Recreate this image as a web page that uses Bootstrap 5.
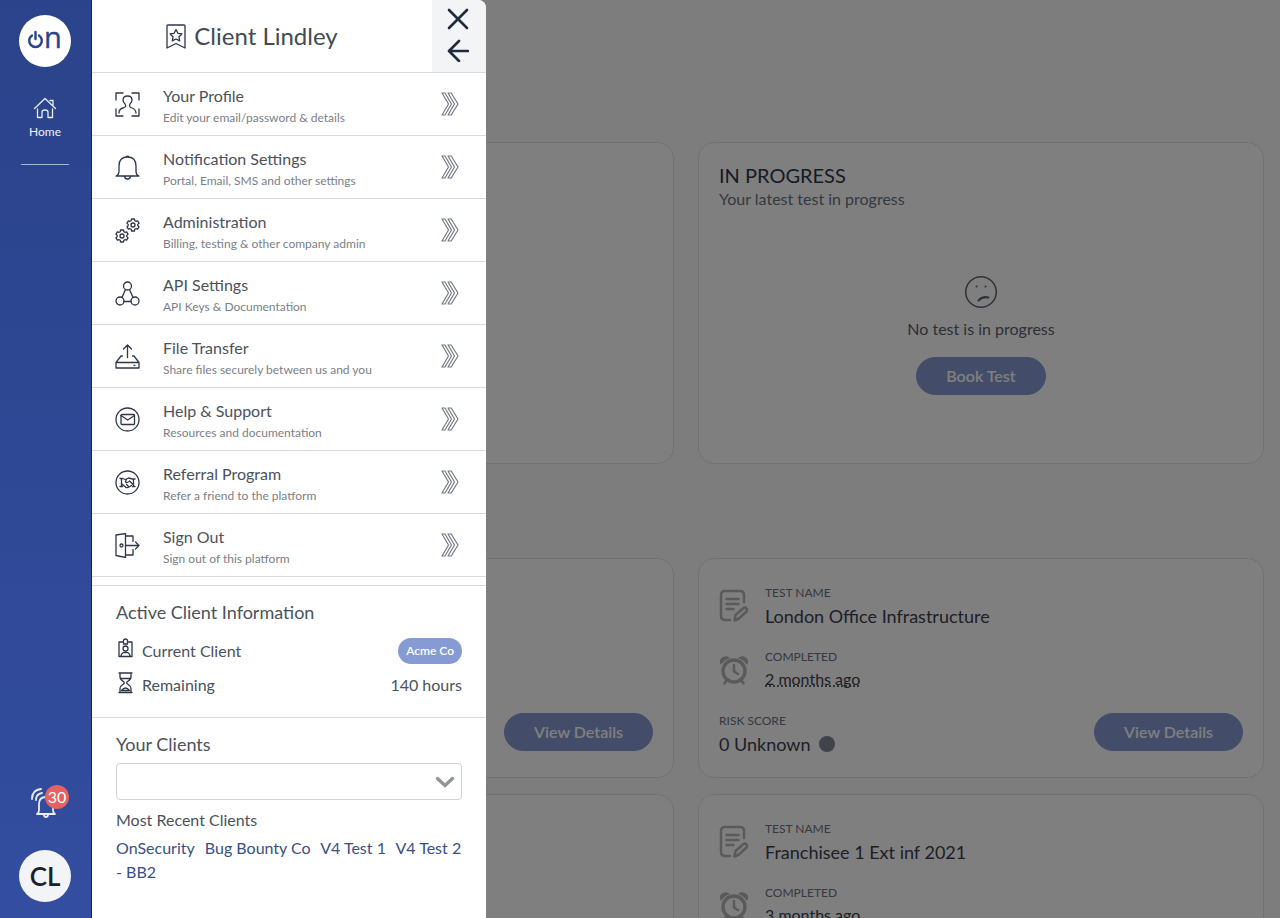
<!DOCTYPE html>
<html lang="en">
<head>
<meta charset="utf-8">
<meta name="viewport" content="width=device-width, initial-scale=1">
<title>Client Portal</title>
<link href="https://cdn.jsdelivr.net/npm/bootstrap@5.3.0/dist/css/bootstrap.min.css" rel="stylesheet">
<style>
  body { font-family: Lato, "Liberation Sans", sans-serif; font-size: 16px; line-height: 24px; color: #4b525b; background: #fafafa; }
  .ico { fill: none; stroke: #2d3748; stroke-width: 1.3; stroke-linecap: round; stroke-linejoin: round; flex: none; }
  .fs-12 { font-size: 12px; line-height: 20px; }
  .fs-18 { font-size: 18px; }

  /* left rail */
  .rail { width: 92px; padding: 15px 1px 0 0; background: linear-gradient(#2b438a, #334da0); border-right: 1px solid #0b1f80; z-index: 3; }
  .disc { width: 52px; height: 52px; background: #fff; }
  .rail .ico { stroke: #e8ecf7; }
  .rail-link { color: #eef1fa; font-size: 12px; line-height: 18px; }
  .rail-rule { width: 48px; margin-top: 23px; border-color: #a9b5db; opacity: 1; }
  .count { width: 24px; height: 24px; top: -3px; left: 15px; background: #e56260; color: #fff; line-height: 24px; }
  .initials { background: #f3f4f6; color: #1a202c; font-size: 26px; font-weight: 600; }

  /* drawer over the page */
  .drawer { left: 92px; top: 0; bottom: 0; width: 394px; background: #fff; border-radius: 0 8px 0 0; z-index: 2; overflow: hidden; }
  .rule { border-bottom: 1px solid #d8dadd; }
  .drawer-title { font-size: 24px; line-height: 32px; padding: 20px 20px 20px 0; color: #434b56; }
  .drawer-tools { width: 54px; padding-right: 2px; background: #f3f4f6; }
  .drawer-tools .ico { stroke: #1f2c3d; stroke-width: 2.6; }
  .entry { padding: 7px 27px 7px 23px; color: #4b525b; }
  .entry small { color: #7a8088; }
  .entry-text { margin-left: 23px; padding-top: 4px; }
  .chev { stroke: #737a85; stroke-width: 1.2; }
  .panel { padding: 14px 24px 15px; }
  .panel-title { display: block; font-size: 18px; line-height: 24px; margin-bottom: 10px; }
  label.panel-title { margin-bottom: 7px; }
  .line-row { height: 34px; }
  .tag { background: #869bd4; color: #fff; font-size: 12px; font-weight: 600; line-height: 26px; padding: 0 8px; }
  .client-pick { height: 37px; border: 1px solid #cfd2d6; border-radius: 4px; background: #fff url("data:image/svg+xml,%3Csvg xmlns='http://www.w3.org/2000/svg' viewBox='0 0 20 12'%3E%3Cpath d='M2.5 2.5 10 9.500l7.500-7' fill='none' stroke='%238f959b' stroke-width='3.400' stroke-linecap='round'/%3E%3C/svg%3E") no-repeat right 6px center / 20px 12px; }
  .recent a { color: #3a4f86; margin-right: 6px; text-decoration: none; }

  /* page behind */
  .shade { background: rgba(0, 0, 0, .5); z-index: 1; }
  .page { padding: 142px 16px 0; }
  .tile { border: 1px solid #e4e5e7; border-radius: 16px; background: #fff; padding: 20px; color: #5a616b; }
  .tile-tall { min-height: 322px; margin-bottom: 94px; }
  .tile-test { min-height: 220px; padding-top: 24px; margin-bottom: 16px; }
  .tile-heading { font-size: 20px; line-height: 24px; color: #2d3748; }
  .dim { color: #6b7280; }
  .gap-18 { gap: 18px; }
  .value { line-height: 26px; color: #3a414e; }
  .value-date { line-height: 24px; padding-bottom: 2px; color: #3a414e; }
  .action { background: #869bd4; color: #fff; border-radius: 19px; padding: 7px 29px; border: 1px solid #869bd4; font-weight: 600; line-height: 22px; }
  .tile-test .action { margin-bottom: 6px; }
  .soft { stroke: #b4b4b4; stroke-width: 2.5; }
  .face { stroke: #5d6470; }
  .dot { width: 16px; height: 16px; background: #7e8694; }
</style>
</head>
<body>
<svg class="d-none">
  <symbol id="chev" viewBox="0 0 18 24"><path d="M1 1h3l6.500 11L4 23H1l6.500-11zM7 1h3.200L17 12l-6.800 11H7l6.500-11z"/></symbol>
  <symbol id="gear" viewBox="0 0 14 14"><path d="M5.600 1h2.800l.4 1.700 1.100.6 1.700-.5L13 5.200l-1.200 1.200v1.200L13 8.800l-1.400 2.400-1.700-.5-1.100.6-.4 1.700H5.600l-.4-1.700-1.100-.6-1.700.5L1 8.800l1.200-1.200V6.400L1 5.200l1.400-2.400 1.700.5 1.100-.6z"/><circle cx="7" cy="7" r="2"/></symbol>
  <symbol id="note" viewBox="0 0 30 34"><path d="M25 13V6q0-4-4-4H6Q2 2 2 6v21q0 4 4 4h5M7.500 10h12M7.500 15h12M7.500 20h7"/><path d="M15.500 31.500l1-5.500 8-7q2-1 3 .5t0 3l-7.500 7z"/></symbol>
  <symbol id="alarm" viewBox="0 0 30 32"><g fill="#b4b4b4" stroke="none"><path d="M1 9q-1-4 3-6t7 1q-6 2-9 7zM29 9q1-4-3-6t-7 1q6 2 9 7z"/></g><circle cx="15" cy="17" r="11" stroke-width="3.400"/><path d="M15 11v6.500l4 2.500M7 27l-1.500 2.500M23 27l1.500 2.500"/></symbol>
</svg>

<div class="d-flex vh-100 overflow-hidden position-relative">

  <nav class="rail d-flex flex-column align-items-center flex-shrink-0" aria-label="Main">
    <a href="#" class="disc rounded-circle" aria-label="on">
      <svg class="d-block" width="52" height="52" viewBox="0 0 52 52"><path d="M13 20.500a6.300 6.300 0 1 0 7 0M16.500 17v7" fill="none" stroke="#2b438a" stroke-width="2.400" stroke-linecap="round"/><text x="25" y="33" font-family="Open Sans, sans-serif" font-size="29" fill="#2b438a" stroke="#2b438a" stroke-width=".4">n</text></svg>
    </a>
    <a href="#" class="rail-link text-decoration-none d-flex flex-column align-items-center mt-4 pt-1">
      <svg class="ico" width="24" height="24" viewBox="0 0 24 24"><path d="M1.500 13.500 12 3.500l10.500 10M17 5.500h3v5M4.500 14v8.500H9V17q0-2 3-2t3 2v5.500h4.500V14"/></svg>
      <span class="mt-1">Home</span>
    </a>
    <hr class="rail-rule mb-0">
    <a href="#" class="position-relative d-block mt-auto mb-4" aria-label="30 notifications">
      <svg class="ico d-block mb-1" width="30" height="34" viewBox="0 0 30 34"><path stroke-width="1.800" d="M2 11Q2 2 11 1M6 12q0-6 6-7M7 26q2-1 2-4v-6q0-7 7-7t7 7v6q0 3 2 4zM14 26.500q0 2.500 2 2.500t2-2.500"/></svg>
      <span class="count position-absolute rounded-circle text-center">30</span>
    </a>
    <button type="button" class="disc initials rounded-circle border-0 p-0 mb-3">CL</button>
  </nav>

  <aside class="drawer position-absolute" aria-label="Account menu">
    <header class="rule d-flex">
      <h1 class="drawer-title flex-grow-1 d-flex align-items-center justify-content-center m-0 fw-normal">
        <svg class="ico me-2" width="20" height="26" viewBox="0 0 20 26"><path d="M1 3q0-1 1-1h16q1 0 1 1v22L10 20.500 1 25zM10 6.500l1.900 3.800 4.100.6-3 2.900.7 4.100L10 16l-3.700 1.900.7-4.100-3-2.900 4.100-.6z"/></svg>
        Client Lindley
      </h1>
      <div class="drawer-tools d-flex flex-column align-items-center gap-2 pt-2">
        <button type="button" class="btn p-0 border-0 d-flex" aria-label="Close"><svg class="ico" width="22" height="22" viewBox="0 0 22 22"><path d="M2 2l18 18M20 2 2 20"/></svg></button>
        <button type="button" class="btn p-0 border-0 d-flex" aria-label="Back"><svg class="ico" width="22" height="24" viewBox="0 0 22 24"><path d="M12 3 2 13l10 10M2 13h19"/></svg></button>
      </div>
    </header>

    <a href="#" class="entry rule d-flex align-items-center text-decoration-none">
      <svg class="ico" width="25" height="25" viewBox="0 0 25 25"><path d="M1 8V1h7M17 1h7v7M24 17v7h-7M8 24H1v-7M4 21q0-4 4-5t2-4q-2-2-2-4 0-4 4.500-4T17 8q0 2-2 4-1.500 3 2 4t4 5"/></svg>
      <span class="entry-text d-flex flex-column flex-grow-1">Your Profile<small class="fs-12">Edit your email/password &amp; details</small></span>
      <svg class="ico chev" width="18" height="24"><use href="#chev"/></svg>
    </a>
    <a href="#" class="entry rule d-flex align-items-center text-decoration-none">
      <svg class="ico" width="25" height="25" viewBox="0 0 25 25"><path d="M1 21q3-1 3-5v-5q0-9 8.500-9T21 11v5q0 4 3 5zM9.500 21.500q.5 2.500 3 2.500t3-2.500M11 2q1.500-1.500 3 0"/></svg>
      <span class="entry-text d-flex flex-column flex-grow-1">Notification Settings<small class="fs-12">Portal, Email, SMS and other settings</small></span>
      <svg class="ico chev" width="18" height="24"><use href="#chev"/></svg>
    </a>
    <a href="#" class="entry rule d-flex align-items-center text-decoration-none">
      <svg class="ico" width="25" height="25" viewBox="0 0 25 25"><use href="#gear" x="11" width="14" height="14"/><use href="#gear" y="11" width="14" height="14"/></svg>
      <span class="entry-text d-flex flex-column flex-grow-1">Administration<small class="fs-12">Billing, testing &amp; other company admin</small></span>
      <svg class="ico chev" width="18" height="24"><use href="#chev"/></svg>
    </a>
    <a href="#" class="entry rule d-flex align-items-center text-decoration-none">
      <svg class="ico" width="25" height="25" viewBox="0 0 25 25"><circle cx="12.500" cy="5" r="4"/><circle cx="5" cy="20" r="4"/><circle cx="20" cy="20" r="4"/><path d="M10.500 8.500 7 16.500M14.500 8.500l3.500 8M9 20.500h7"/></svg>
      <span class="entry-text d-flex flex-column flex-grow-1">API Settings<small class="fs-12">API Keys &amp; Documentation</small></span>
      <svg class="ico chev" width="18" height="24"><use href="#chev"/></svg>
    </a>
    <a href="#" class="entry rule d-flex align-items-center text-decoration-none">
      <svg class="ico" width="25" height="25" viewBox="0 0 25 25"><path d="M12.500 13.500V1M8.500 5l4-4 4 4M7.500 12H6l-5 6.500V24h23v-5.500L19 12h-1.500M1 18.500h23M19 21.300h1"/></svg>
      <span class="entry-text d-flex flex-column flex-grow-1">File Transfer<small class="fs-12">Share files securely between us and you</small></span>
      <svg class="ico chev" width="18" height="24"><use href="#chev"/></svg>
    </a>
    <a href="#" class="entry rule d-flex align-items-center text-decoration-none">
      <svg class="ico" width="25" height="25" viewBox="0 0 25 25"><circle cx="12.500" cy="12.500" r="11.500"/><rect x="6" y="7.500" width="13.500" height="10" rx="1"/><path d="M6 8.500l6.700 4.500 6.800-4.500"/></svg>
      <span class="entry-text d-flex flex-column flex-grow-1">Help &amp; Support<small class="fs-12">Resources and documentation</small></span>
      <svg class="ico chev" width="18" height="24"><use href="#chev"/></svg>
    </a>
    <a href="#" class="entry rule d-flex align-items-center text-decoration-none">
      <svg class="ico" width="25" height="25" viewBox="0 0 25 25"><circle cx="12.500" cy="12.500" r="11.500"/><path d="M5 8.500h2.500l3 1 3-1.500 4 1h2.500M5 16.500h2.500M20 16.500h-2.500M6.500 8.500v8M18.500 9v7.500M11.500 9.500q-2 3 0 3t3-1.500l4 4M7 14l4 3.500q1.500.5 3-.500l2.500-1.500M11.500 14.500l2 2"/></svg>
      <span class="entry-text d-flex flex-column flex-grow-1">Referral Program<small class="fs-12">Refer a friend to the platform</small></span>
      <svg class="ico chev" width="18" height="24"><use href="#chev"/></svg>
    </a>
    <a href="#" class="entry rule d-flex align-items-center text-decoration-none">
      <svg class="ico" width="25" height="25" viewBox="0 0 25 25"><path d="M1 2l9.500-1.500v24L1 22.500zM10.500 3H18v5.500M10.500 22H18v-5.500M11 12.500h13M20.500 9l3.500 3.500-3.500 3.500"/><circle cx="6.500" cy="12.500" r="1.500"/></svg>
      <span class="entry-text d-flex flex-column flex-grow-1">Sign Out<small class="fs-12">Sign out of this platform</small></span>
      <svg class="ico chev" width="18" height="24"><use href="#chev"/></svg>
    </a>
    <div class="rule pt-2"></div>

    <section class="panel rule">
      <h2 class="panel-title fw-normal">Active Client Information</h2>
      <div class="line-row d-flex align-items-center">
        <svg class="ico me-2 mb-1" width="18" height="22" viewBox="0 0 18 22"><path d="M7 4H3v14.500h13V4h-4M7.500 6V3q0-2 2-2t2 2v3zM5 18.500q0-3 2.500-4h4q2.500 1 2.500 4"/><circle cx="9.500" cy="10.500" r="2.500"/></svg>
        <span>Current Client</span><span class="tag rounded-pill ms-auto">Acme Co</span>
      </div>
      <div class="line-row d-flex align-items-center">
        <svg class="ico me-2 mb-1" width="18" height="22" viewBox="0 0 18 22"><path d="M3 1h13M3 20.500h13M4 1v4q0 2.500 3.500 4.500 1.500 1.200 0 2.500Q4 14 4 17v3.500M15 1v4q0 2.500-3.500 4.500-1.500 1.200 0 2.500Q15 14 15 17v3.500M5 6.500h9M5.500 18.500q4-5 8 0z"/></svg>
        <span>Remaining</span><span class="ms-auto">140 hours</span>
      </div>
    </section>

    <section class="panel">
      <label class="panel-title" for="client">Your Clients</label>
      <select id="client" class="form-select client-pick mb-2"><option value="" selected></option></select>
      <p class="mb-1">Most Recent Clients</p>
      <p class="recent mb-0"><a href="#">OnSecurity</a> <a href="#">Bug Bounty Co</a> <a href="#">V4 Test 1</a> <a href="#">V4 Test 2 - BB2</a></p>
    </section>
  </aside>

  <main class="page flex-grow-1 overflow-hidden">
    <div class="row">
      <div class="col-6"><div class="tile tile-tall"></div></div>
      <div class="col-6">
        <div class="tile tile-tall d-flex flex-column">
          <h2 class="tile-heading fw-normal mb-0">IN PROGRESS</h2>
          <span class="dim">Your latest test in progress</span>
          <div class="d-flex flex-column align-items-center justify-content-center flex-grow-1 pt-3">
            <svg class="ico face" width="34" height="34" viewBox="0 0 34 34"><circle cx="17" cy="17" r="15.300" stroke-width="1.500"/><path stroke-width="2" d="M12.500 11.500h.1M21.500 11.500h.1M14.500 25.500q4-4.500 10-3"/></svg>
            <p class="my-2 pb-1">No test is in progress</p>
            <button type="button" class="btn action mt-1">Book Test</button>
          </div>
        </div>
      </div>
      <div class="col-6"><div class="tile tile-test d-flex align-items-end justify-content-end"><button type="button" class="btn action">View Details</button></div></div>
      <div class="col-6">
        <article class="tile tile-test d-flex flex-column gap-18">
          <div class="d-flex align-items-center gap-3">
            <svg class="ico soft" width="30" height="34"><use href="#note"/></svg>
            <div><div class="dim fs-12">TEST NAME</div><div class="value fs-18">London Office Infrastructure</div></div>
          </div>
          <div class="d-flex align-items-center gap-3">
            <svg class="ico soft" width="30" height="32"><use href="#alarm"/></svg>
            <div><div class="dim fs-12">COMPLETED</div><div class="value-date"><abbr title="2 months ago">2 months ago</abbr></div></div>
          </div>
          <div class="d-flex align-items-end justify-content-between">
            <div><div class="dim fs-12">RISK SCORE</div><div class="value fs-18 d-flex align-items-center gap-2">0 Unknown <span class="dot rounded-circle"></span></div></div>
            <button type="button" class="btn action">View Details</button>
          </div>
        </article>
      </div>
      <div class="col-6"><div class="tile tile-test"></div></div>
      <div class="col-6">
        <article class="tile tile-test d-flex flex-column gap-18">
          <div class="d-flex align-items-center gap-3">
            <svg class="ico soft" width="30" height="34"><use href="#note"/></svg>
            <div><div class="dim fs-12">TEST NAME</div><div class="value fs-18">Franchisee 1 Ext inf 2021</div></div>
          </div>
          <div class="d-flex align-items-center gap-3">
            <svg class="ico soft" width="30" height="32"><use href="#alarm"/></svg>
            <div><div class="dim fs-12">COMPLETED</div><div class="value-date"><abbr title="3 months ago">3 months ago</abbr></div></div>
          </div>
        </article>
      </div>
    </div>
  </main>
  <div class="shade position-absolute top-0 start-0 w-100 h-100"></div>
</div>
<script src="https://cdn.jsdelivr.net/npm/bootstrap@5.3.0/dist/js/bootstrap.bundle.min.js"></script>
</body>
</html>
